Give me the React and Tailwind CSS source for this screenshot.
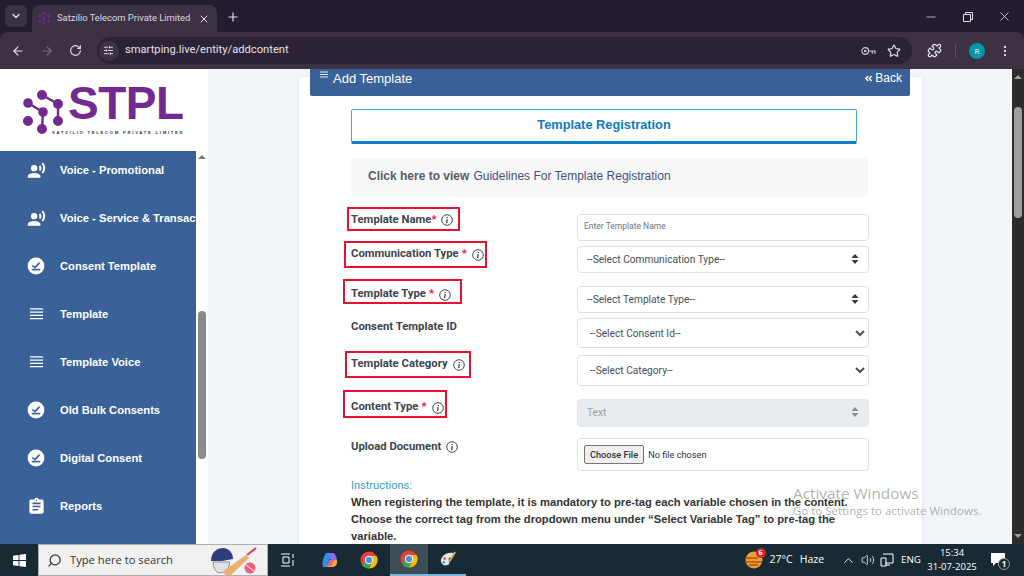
import { ArrowLeft, ArrowRight, ChevronDown, ChevronUp, Minus, MoreVertical, Plus, Puzzle, RotateCw, Search, SlidersHorizontal, Star, Volume2, X } from 'lucide-react';
import { FaAngleDoubleLeft } from 'react-icons/fa';
import { MdAssignment, MdRecordVoiceOver } from 'react-icons/md';

const ui = { fontFamily: '"Open Sans", "Noto Sans", sans-serif' };
const arial = { fontFamily: '"Liberation Sans", Arial, sans-serif' };
const roboto = { fontFamily: 'Roboto, "Liberation Sans", sans-serif' };

function LogoMark({ className }) {
  return (
    <svg viewBox="0 0 44 48" className={className} fill="#732a8e" stroke="#732a8e" strokeWidth="2.4">
      <path d="M6 13 21 22M20 5 36 14V31M21 22 20 39" fill="none" />
      <circle cx="6" cy="13" r="3.6" />
      <circle cx="20" cy="5" r="3.8" />
      <circle cx="36" cy="14" r="3.8" />
      <circle cx="21" cy="22" r="3.6" />
      <circle cx="36" cy="31" r="3.8" />
      <circle cx="6" cy="31" r="3.8" />
      <circle cx="20" cy="39" r="3.8" />
    </svg>
  );
}

function ConsentIcon() {
  return (
    <svg viewBox="0 0 18 18" className="h-[18px] w-[18px]">
      <circle cx="9" cy="9" r="8.4" fill="#fff" />
      <path d="M5.4 8.4 7.8 10.6 12.6 5.6" fill="none" stroke="#3a6298" strokeWidth="1.6" />
      <path d="M4.8 12.6H13.2" fill="none" stroke="#3a6298" strokeWidth="1.6" />
    </svg>
  );
}

function ListIcon() {
  return (
    <svg viewBox="0 0 16 14" className="h-[14px] w-[15px]" stroke="#fff" strokeWidth="1.3">
      <path d="M1 1.5H15M1 5H15M1 8.5H15M1 12H15" />
    </svg>
  );
}

function KeyIcon() {
  return (
    <svg viewBox="0 0 16 10" className="h-[10px] w-[15px]" fill="none" stroke="#c9c4ce" strokeWidth="1.3">
      <circle cx="4.5" cy="5" r="3.6" />
      <circle cx="4.5" cy="5" r="0.8" fill="#c9c4ce" />
      <path d="M8 5H15V8M12 5V8" />
    </svg>
  );
}

const voice = <MdRecordVoiceOver className="text-[19px] text-white" />;
const consent = <ConsentIcon />;
const list = <ListIcon />;

const menu = [
  { label: 'Voice - Promotional', icon: voice },
  { label: 'Voice - Service & Transactional', icon: voice },
  { label: 'Consent Template', icon: consent },
  { label: 'Template', icon: list },
  { label: 'Template Voice', icon: list },
  { label: 'Old Bulk Consents', icon: consent },
  { label: 'Digital Consent', icon: consent },
  { label: 'Reports', icon: <MdAssignment className="text-[19px] text-white" /> }
];

function Info() {
  return (
    <svg viewBox="0 0 12 12" className="h-[12px] w-[12px] shrink-0" fill="none" stroke="#333" strokeWidth="0.9">
      <circle cx="6" cy="6" r="5.3" />
      <path d="M6.3 3.1V3.9M6.2 5.2 5.7 9" strokeWidth="1.2" />
    </svg>
  );
}

function UpDown({ color = '#343a40' }) {
  return (
    <svg viewBox="0 0 8 10" className="pointer-events-none absolute right-[10px] top-[9px] h-[10px] w-[8px]" fill={color}>
      <path d="M4 0 7.5 4H.5ZM4 10 .5 6H7.5Z" />
    </svg>
  );
}

const fieldClass = 'h-full w-full rounded-[4px] border outline-none';
const normalField = `${fieldClass} border-[#dde1e8] bg-white text-[10.2px] text-[#495057]`;

function Label({ box, gap, text, star, starGap = 'ml-[3px]', info = true }) {
  return (
    <div className={`flex items-center text-[11.3px] font-bold leading-[16px] text-[#3e444d] ${box}`} style={roboto}>
      <span className="whitespace-nowrap">{text}</span>
      {star && <span className={`text-[#e8112d] ${starGap}`}>{star}</span>}
      {info && <span className={`flex ${gap}`}><Info /></span>}
    </div>
  );
}

function Row({ className, label, children }) {
  return (
    <div className={`grid w-[518px] grid-cols-[226px_292px] ${className}`}>
      <div>{label}</div>
      <div className="relative h-full">{children}</div>
    </div>
  );
}

function BrowserChrome() {
  return (
    <header className="shrink-0 bg-[#241c30] text-[#e4e0e8]" style={ui}>
      <div className="flex h-[32px] items-end pl-[5px]">
        <div className="mb-[5px] flex h-[22px] w-[22px] items-center justify-center rounded-[6px] bg-[#3c3244]">
          <ChevronDown size={12} strokeWidth={2.5} />
        </div>
        <div className="ml-[5px] flex h-[27px] w-[185px] items-center rounded-t-[8px] bg-[#3c3244] pl-[6px] pr-[7px]" style={roboto}>
          <LogoMark className="h-[14px] w-[13px] shrink-0" />
          <span className="ml-[6px] flex-1 whitespace-nowrap text-[9.4px] text-[#dcd8e0]">Satzilio Telecom Private Limited</span>
          <X size={12} strokeWidth={2} />
        </div>
        <div className="mb-[8px] ml-[9px]">
          <Plus size={14} strokeWidth={2} />
        </div>
        <div className="mb-[8px] ml-auto flex w-[100px] items-center justify-between pr-[12px]">
          <Minus size={14} strokeWidth={1.3} />
          <svg viewBox="0 0 10 10" className="h-[10px] w-[10px]" fill="none" stroke="#e4e0e8" strokeWidth="1">
            <path d="M.5 2.5H7.5V9.5H.5ZM2.5 2.5V.5H9.5V7.5H7.5" />
          </svg>
          <X size={15} strokeWidth={1.3} />
        </div>
      </div>
      <div className="flex h-[37px] items-center rounded-t-[8px] bg-[#3c3244] pl-[11px] pr-[12px]">
        <ArrowLeft size={14} strokeWidth={2} />
        <ArrowRight size={14} strokeWidth={2} className="ml-[15px] text-[#776f7e]" />
        <RotateCw size={13} strokeWidth={2} className="ml-[15px]" />
        <div className="ml-[15px] flex h-[27px] w-[816px] items-center rounded-full bg-[#2b2235] pl-[2px] pr-[11px]">
          <div className="flex h-[20px] w-[20px] items-center justify-center rounded-full bg-[#3c3244]">
            <SlidersHorizontal size={11} />
          </div>
          <span className="ml-[6px] flex-1 text-[11.2px] text-[#e4e0e8]" style={roboto}>smartping.live/entity/addcontent</span>
          <KeyIcon />
          <Star size={14} className="ml-[11px]" />
        </div>
        <Puzzle size={15} className="ml-[15px]" />
        <div className="ml-[13px] h-[14px] w-px bg-[#5a5062]" />
        <div className="ml-[13px] flex h-[16px] w-[16px] items-center justify-center rounded-full bg-[#0097a7] text-[8px] text-white">R</div>
        <MoreVertical size={14} className="ml-[13px]" />
      </div>
    </header>
  );
}

function Sidebar() {
  return (
    <aside className="flex w-[208px] shrink-0 flex-col bg-white">
      <div className="flex h-[82px] shrink-0 pl-[22px] pt-[15px]">
        <LogoMark className="mt-[6px] h-[48px] w-[44px] shrink-0" />
        <div className="-ml-[14px] flex flex-col" style={arial}>
          <span className="ml-[16px] text-[46px] font-bold leading-[38px] tracking-[-0.5px] text-[#732a8e]">STPL</span>
          <span className="mt-[8px] whitespace-nowrap text-[4.2px] font-bold leading-[5px] tracking-[1.73px] text-[#333]">SATZILIO TELECOM PRIVATE LIMITED</span>
        </div>
      </div>
      <div className="flex min-h-0 flex-1">
        <nav className="w-[196px] overflow-hidden bg-[#3a6298]">
          <ul className="-mt-[5px]">
            {menu.map((item) => (
              <li key={item.label} className="flex h-[48px] items-center whitespace-nowrap text-[11.2px] font-bold text-white" style={arial}>
                <span className="flex w-[60px] shrink-0 justify-center pl-[12px]">{item.icon}</span>
                {item.label}
              </li>
            ))}
          </ul>
        </nav>
        <div className="flex w-[12px] flex-col items-center pt-[4px]">
          <div className="h-0 w-0 border-x-[4px] border-b-[4px] border-x-transparent border-b-[#777]" />
          <div className="mt-[152px] h-[148px] w-[8px] rounded-full bg-[#8a8a8a]" />
        </div>
      </div>
    </aside>
  );
}

function TemplateForm() {
  return (
    <div className="pl-[52px]">
      <div className="mt-[13px] flex h-[35px] w-[506px] items-center justify-center rounded-[2px] border border-b-[3px] border-[#4aa3dc] border-b-[#0b7dc4] pb-[2px] text-[12.8px] font-bold text-[#0b7dc4]" style={arial}>
        Template Registration
      </div>
      <div className="mt-[13px] flex h-[40px] w-[517px] items-center rounded-[2px] bg-[#f7f8fa] pb-[2px] pl-[17px] text-[12px] text-[#44507c]" style={arial}>
        <b className="mr-[4px] text-[#5b5b6b]">Click here to view</b> Guidelines For Template Registration
      </div>

      <Row className="mt-[14px] h-[27px]" label={<Label box="-ml-[4px] -mt-[4px] h-[24px] w-[113px] border-2 border-[#e8112d] pl-[2px] pt-[2px]" gap="ml-[4px]" text="Template Name" star="*" starGap="ml-0" />}>
        <input className={`${fieldClass} border-[#dde1e8] bg-white pb-[2px] pl-[6px] text-[8.5px] placeholder:text-[#6c757d]`} placeholder="Enter Template Name" style={roboto} />
      </Row>
      <Row className="mt-[7px] h-[27px]" label={<Label box="-ml-[7px] -mt-[4px] h-[27px] w-[143px] items-start border-2 border-[#e8112d] pl-[5px] pt-[3px]" gap="ml-[5px] mt-[3px]" text="Communication Type" star="*" />}>
        <select className={`${normalField} appearance-none pl-[9px]`} style={roboto}>
          <option>--Select Communication Type--</option>
        </select>
        <UpDown />
      </Row>
      <Row className="mt-[13px] h-[27px]" label={<Label box="-ml-[8px] -mt-[6px] h-[25px] w-[119px] items-start border-2 border-[#e8112d] pl-[6px] pt-[5px]" gap="ml-[5px] mt-[3px]" text="Template Type" star="*" />}>
        <select className={`${normalField} appearance-none pl-[9px]`} style={roboto}>
          <option>--Select Template Type--</option>
        </select>
        <UpDown />
      </Row>
      <Row className="mt-[6px] h-[30px]" label={<Label box="pt-[1px]" text="Consent Template ID" info={false} />}>
        <select className={`${normalField} pl-[8px]`} style={roboto}>
          <option>--Select Consent Id--</option>
        </select>
      </Row>
      <Row className="mt-[7px] h-[31px]" label={<Label box="-ml-[6px] -mt-[4px] h-[27px] w-[126px] items-start border-2 border-[#e8112d] pl-[4px] pt-[3px]" gap="ml-[5px] mt-[3px]" text="Template Category" />}>
        <select className={`${normalField} pl-[8px]`} style={roboto}>
          <option>--Select Category--</option>
        </select>
      </Row>
      <Row className="mt-[12px] h-[28px]" label={<Label box="-ml-[8px] -mt-[8px] h-[28px] w-[104px] items-start border-2 border-[#e8112d] pl-[6px] pt-[7px]" gap="ml-[5px] mt-[3px]" text="Content Type" star="*" />}>
        <select disabled className={`${fieldClass} appearance-none border-[#e4e7ea] bg-[#e9ecef] pl-[9px] text-[10.2px] text-[#9aa0a6] opacity-100`} style={roboto}>
          <option>Text</option>
        </select>
        <UpDown color="#8a9096" />
      </Row>
      <Row className="mt-[12px] h-[33px]" label={<Label box="pt-[1px]" gap="ml-[5px]" text="Upload Document" />}>
        <div className={`${normalField} flex items-center pl-[6px]`} style={roboto}>
          <input type="file" className="w-full text-[9.2px] text-[#333] file:mr-[4px] file:h-[19px] file:rounded-[2px] file:border file:border-solid file:border-[#767676] file:bg-[#efefef] file:px-[5px] file:font-medium" />
        </div>
      </Row>

      <p className="mt-[6px] text-[11px] leading-[17px] text-[#33a4c9]" style={roboto}>Instructions:</p>
      <p className="w-[517px] text-[11.2px] font-bold leading-[17px] text-[#333]" style={arial}>
        When registering the template, it is mandatory to pre-tag each variable chosen in the content. Choose the correct tag from the dropdown menu under “Select Variable Tag” to pre-tag the variable.
      </p>
    </div>
  );
}

function CricketDoodle() {
  return (
    <svg viewBox="0 0 50 30" className="h-[30px] w-[50px]">
      <path d="M1 16C1 7 7 3 13 3 19 3 23 8 23 14L12 16Z" fill="#2d3f79" />
      <path d="M3 17H20L17 27 8 28Q3 24 3 17Z" fill="#dfe3e6" stroke="#777" strokeWidth="0.8" />
      <path d="M12 27 36 10 39 13 19 32Z" fill="#e7b16f" />
      <path d="M37 10 46 3" stroke="#d8455a" strokeWidth="2.2" />
      <circle cx="40" cy="23" r="5.5" fill="#ee5d7e" />
      <path d="M36 20 44 26" stroke="#fff" strokeWidth="1" />
    </svg>
  );
}

function ChromeLogo({ className }) {
  return (
    <svg viewBox="0 0 18 18" className={className}>
      <circle cx="9" cy="9" r="8.5" fill="#e34133" />
      <path d="M9 9 1.6 13.3A8.5 8.5 0 0 0 9 17.5L13 9Z" fill="#34a853" />
      <path d="M9 5H16.6A8.5 8.5 0 0 1 9 17.5L12.5 11Z" fill="#fbbc05" />
      <circle cx="9" cy="9" r="3.8" fill="#4a90e2" stroke="#fff" strokeWidth="1" />
    </svg>
  );
}

function Taskbar() {
  return (
    <footer className="flex h-[32px] shrink-0 items-center bg-[#182a33] text-white" style={ui}>
      <div className="flex w-[38px] shrink-0 justify-center">
        <svg viewBox="0 0 14 14" className="h-[13px] w-[13px]" fill="#fff">
          <path d="M0 2 6 1V6.5H0ZM7 .8 14 0V6.5H7ZM0 7.5H6V13L0 12ZM7 7.5H14V14L7 13.2Z" />
        </svg>
      </div>
      <div className="flex h-full w-[230px] shrink-0 items-center border border-[#aab0b4] bg-[#f1f1f1] pl-[8px] text-[#333]">
        <Search size={15} className="-scale-x-100" />
        <span className="ml-[8px] flex-1 whitespace-nowrap text-[11.2px]">Type here to search</span>
        <CricketDoodle />
        <span className="w-[7px]" />
      </div>
      <svg viewBox="0 0 14 14" className="ml-[13px] h-[14px] w-[14px]" fill="none" stroke="#fff" strokeWidth="1">
        <path d="M0 1H9M0 13H9M2 4H8V10H2ZM12 1V5M12 7V13" />
      </svg>
      <svg viewBox="0 0 18 18" className="ml-[26px] h-[18px] w-[18px]">
        <path d="M5 2H11L8 10 5 16H2Q0 10 5 2Z" fill="#2f8fe8" />
        <path d="M7 2H13Q16 6 16 9L10 10Z" fill="#8a6ee8" />
        <path d="M16 9Q17 15 12 16H5L9 9Z" fill="#f0a43a" />
        <path d="M9 10 13 8 11 14 5 16Z" fill="#ea5b8f" />
      </svg>
      <ChromeLogo className="ml-[21px] h-[18px] w-[18px]" />
      <div className="ml-[12px] flex h-full w-[38px] items-center justify-center border-b-2 border-[#7ab6dc] bg-[#3d4c55]">
        <ChromeLogo className="h-[18px] w-[18px]" />
      </div>
      <div className="flex h-full w-[38px] items-center justify-center border-b-2 border-[#7ab6dc]">
        <svg viewBox="0 0 20 20" className="h-[19px] w-[19px]">
          <path d="M3 12C3 6 9 2 15 3 18 4 17 8 13 8 11 8 11 11 12 13 13 17 4 18 3 12Z" fill="#dfe8ee" />
          <circle cx="7" cy="9" r="1.3" fill="#e34133" />
          <circle cx="6" cy="13" r="1.3" fill="#3b82f6" />
          <path d="M12 12 18 2" stroke="#e2b04a" strokeWidth="2" />
        </svg>
      </div>

      <div className="ml-auto flex items-center">
        <div className="relative mr-[5px] h-[18px] w-[20px]">
          <svg viewBox="0 0 20 18" className="h-[18px] w-[20px]">
            <circle cx="9" cy="9" r="8.5" fill="#f0a030" />
            <path d="M1 7H13M0 11H17M4 14H13" stroke="#a8501c" strokeWidth="1.3" />
          </svg>
          <span className="absolute -right-[1px] -top-[3px] flex h-[10px] w-[10px] items-center justify-center rounded-full bg-[#d9252a] text-[7px] font-bold">6</span>
        </div>
        <span className="whitespace-nowrap text-[10.5px]">27°C</span>
        <span className="ml-[7px] whitespace-nowrap text-[10.5px]">Haze</span>
        <ChevronUp size={15} strokeWidth={1.5} className="ml-[17px]" />
        <Volume2 size={14} strokeWidth={1.3} className="ml-[5px]" />
        <svg viewBox="0 0 14 14" className="ml-[5px] h-[14px] w-[14px]" fill="none" stroke="#fff" strokeWidth="1">
          <path d="M3 1H13V10H5M1 5H6V13H1ZM6 12H10" />
        </svg>
        <span className="ml-[7px] text-[9.8px]">ENG</span>
        <div className="ml-[6px] flex w-[50px] flex-col items-center text-[9.5px] leading-[14px]">
          <span>15:34</span>
          <span className="whitespace-nowrap">31-07-2025</span>
        </div>
        <div className="relative ml-[14px] mr-[19px] h-[16px] w-[14px]">
          <svg viewBox="0 0 14 14" className="h-[14px] w-[14px]" fill="#fff">
            <path d="M0 1H14V11H5L2 14V11H0Z" />
          </svg>
          <span className="absolute -bottom-[2px] -right-[5px] flex h-[12px] w-[12px] items-center justify-center rounded-full border border-[#999] bg-[#182a33] text-[8px] font-bold">1</span>
        </div>
      </div>
    </footer>
  );
}

export default function App() {
  return (
    <div className="relative flex h-[576px] w-[1024px] flex-col overflow-hidden bg-white">
      <BrowserChrome />
      <div className="flex min-h-0 flex-1">
        <Sidebar />
        <main className="min-w-0 flex-1 overflow-hidden bg-[#f1f5f9] pl-[90px] pr-[90px] pt-[7px]">
          <section className="h-[600px] w-[625px] rounded-[3px] border border-[#e6ebf7] bg-white">
            <div className="-mt-[8px] ml-[11px] flex h-[27px] w-[600px] items-start justify-between rounded-b-[2px] bg-[#3a6298] pl-[10px] pr-[8px] text-white" style={arial}>
              <div className="flex items-start text-[13px]">
                <svg viewBox="0 0 8 7" className="mt-[2px] h-[7px] w-[8px]" stroke="#dfe6f0" strokeWidth="1.2">
                  <path d="M0 1H8M0 3.5H8M0 6H8" />
                </svg>
                <span className="ml-[5px]">Add Template</span>
              </div>
              <div className="flex items-center text-[12px]">
                <FaAngleDoubleLeft className="text-[9px]" />
                <span className="ml-[2px]">Back</span>
              </div>
            </div>
            <TemplateForm />
          </section>
        </main>
        <div className="flex w-[12px] shrink-0 flex-col items-center bg-[#2c2c2c] pt-[6px]">
          <div className="h-0 w-0 border-x-[4px] border-b-[4px] border-x-transparent border-b-[#a0a0a0]" />
          <div className="mt-[28px] h-[111px] w-[8px] rounded-full bg-[#9f9f9f]" />
          <div className="mt-auto mb-[6px] h-0 w-0 border-x-[4px] border-t-[4px] border-x-transparent border-t-[#a0a0a0]" />
        </div>
      </div>
      <Taskbar />
      <div className="pointer-events-none absolute left-[793px] top-[483px] text-[#8f8f8f]/70" style={ui}>
        <p className="text-[15.3px] leading-[20px]">Activate Windows</p>
        <p className="text-[11.5px] leading-[16px]">Go to Settings to activate Windows.</p>
      </div>
    </div>
  );
}
